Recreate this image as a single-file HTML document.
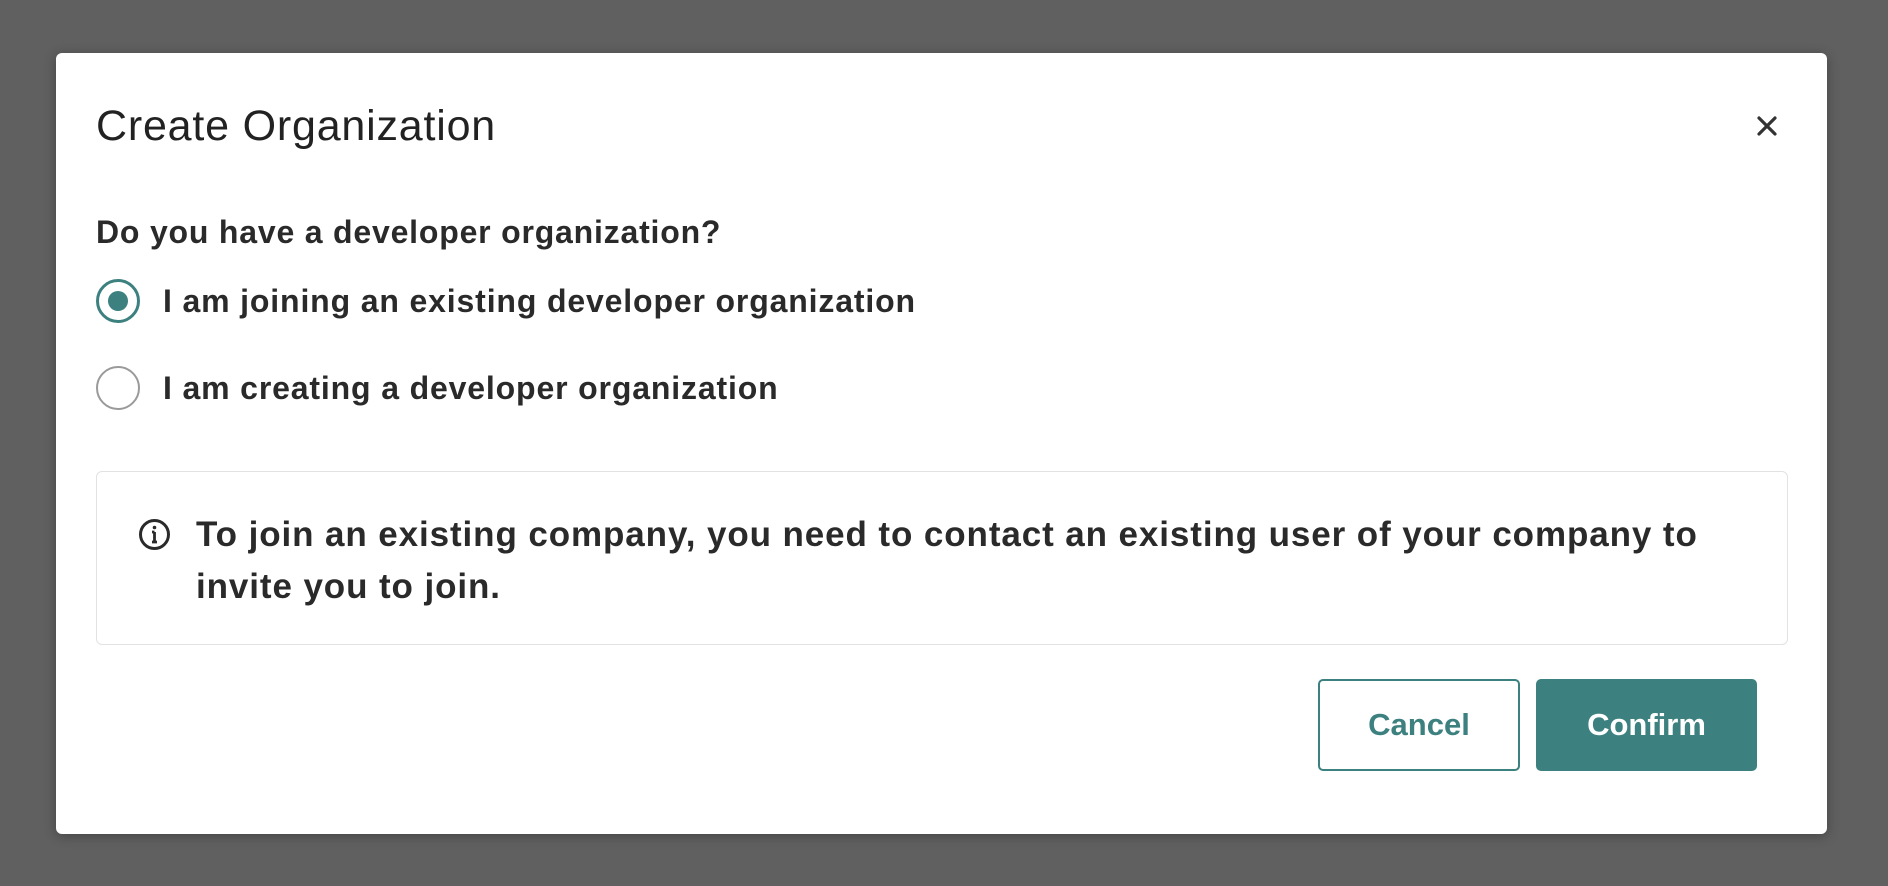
<!DOCTYPE html>
<html><head><meta charset="utf-8"><style>
*{margin:0;padding:0;box-sizing:border-box}
body{width:1888px;height:886px;background:#606060;font-family:"Liberation Sans",sans-serif;color:#2a2a2a;position:relative;overflow:hidden}
.modal{position:absolute;left:56px;top:53px;width:1771px;height:781px;background:#fff;border-radius:6px;box-shadow:0 2px 12px rgba(0,0,0,.3)}
.t{position:absolute;white-space:nowrap}
.title{left:40px;top:49px;font-size:43px;line-height:48px;color:#222;letter-spacing:0.8px}
.q{left:40px;top:162px;font-size:32px;font-weight:bold;line-height:34px;letter-spacing:0.8px}
.r{left:107px;font-size:32px;font-weight:bold;line-height:36px;letter-spacing:0.85px}
.rad{position:absolute;width:44px;height:44px;border-radius:50%;left:40px}
.box{position:absolute;left:40px;top:418px;width:1692px;height:174px;border:1.5px solid #e2e2e2;border-radius:6px}
.info{left:140px;top:456px;font-size:35px;font-weight:bold;line-height:52px;white-space:normal;width:1560px;letter-spacing:0.9px}
.btn{position:absolute;top:626px;height:92px;border-radius:5px;font-size:31px;font-weight:bold;display:flex;align-items:center;justify-content:center}
</style></head><body>
<div class="modal">
<div class="t title">Create Organization</div>
<svg style="position:absolute;left:1700px;top:62px" width="22" height="22" viewBox="0 0 22 22"><path d="M3 3L19 19M19 3L3 19" stroke="#333" stroke-width="3.2" stroke-linecap="round"/></svg>
<div class="t q">Do you have a developer organization?</div>
<div class="rad" style="top:226px;border:3px solid #3d8080"><div style="position:absolute;left:9px;top:9px;width:20px;height:20px;border-radius:50%;background:#3d8080"></div></div>
<div class="t r" style="top:230px">I am joining an existing developer organization</div>
<div class="rad" style="top:313px;border:2.5px solid #9a9a9a"></div>
<div class="t r" style="top:317px">I am creating a developer organization</div>
<div class="box"></div>
<svg style="position:absolute;left:82px;top:465px" width="33" height="33" viewBox="0 0 33 33"><circle cx="16.5" cy="16.5" r="14" fill="none" stroke="#2a2a2a" stroke-width="3"/><path d="M16.5 14V24M14 24H19M14 14H16.5" stroke="#2a2a2a" stroke-width="2.8" fill="none"/><circle cx="16.5" cy="9.5" r="1.8" fill="#2a2a2a"/></svg>
<div class="t info">To join an existing company, you need to contact an existing user of your company to invite you to join.</div>
<div class="btn" style="left:1262px;width:202px;border:2.5px solid #3d8080;color:#3d8080;background:#fff">Cancel</div>
<div class="btn" style="left:1480px;width:221px;background:#3d8080;color:#fff">Confirm</div>
</div>
</body></html>
